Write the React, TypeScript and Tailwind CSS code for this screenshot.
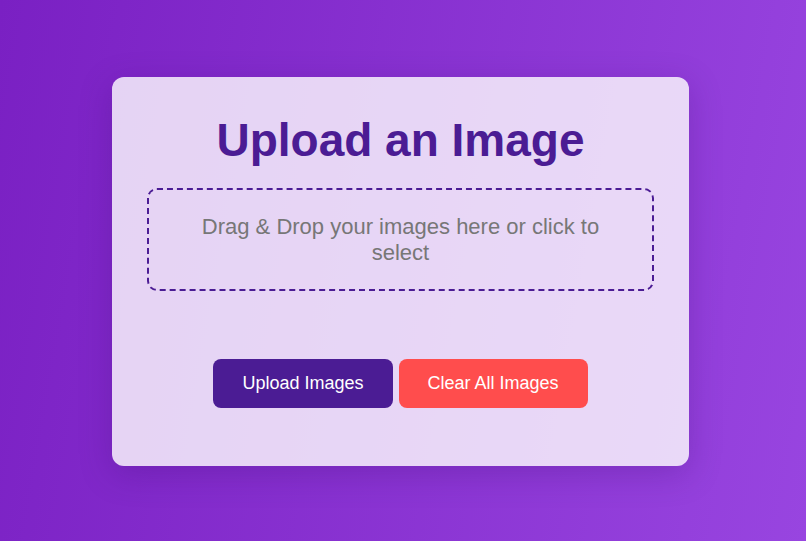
export default function App() {
  return (
    <div
      className="flex min-h-screen items-center justify-center bg-[linear-gradient(100deg,#7a20c3,#9845e0)] pr-[5px] pt-[2px] leading-[normal]"
      style={{ fontFamily: '"Liberation Sans", Arial, sans-serif' }}
    >
      <div className="flex w-[577px] flex-col items-center rounded-xl bg-white/80 px-[35px] pb-[58px] pt-[36px] shadow-[0_8px_32px_rgba(60,10,110,0.25)]">
        <h1 className="text-[46px] leading-[normal] font-bold text-[#4b1c94]">Upload an Image</h1>

        <div className="mt-[21px] w-full cursor-pointer rounded-[10px] border-2 border-dashed border-[#4b1c94] px-[30px] py-[23.5px] text-center text-[22px] leading-[normal] text-[#777]">
          Drag &amp; Drop your images here or click to select
        </div>

        <div className="mt-[68px] flex gap-[6px]">
          <button className="rounded-lg bg-[#4b1c94] px-[29px] py-[14px] text-[18px] leading-[normal] text-white">
            Upload Images
          </button>
          <button className="rounded-lg bg-[#ff4d4d] px-[29px] py-[14px] text-[18px] leading-[normal] text-white">
            Clear All Images
          </button>
        </div>
      </div>
    </div>
  )
}
